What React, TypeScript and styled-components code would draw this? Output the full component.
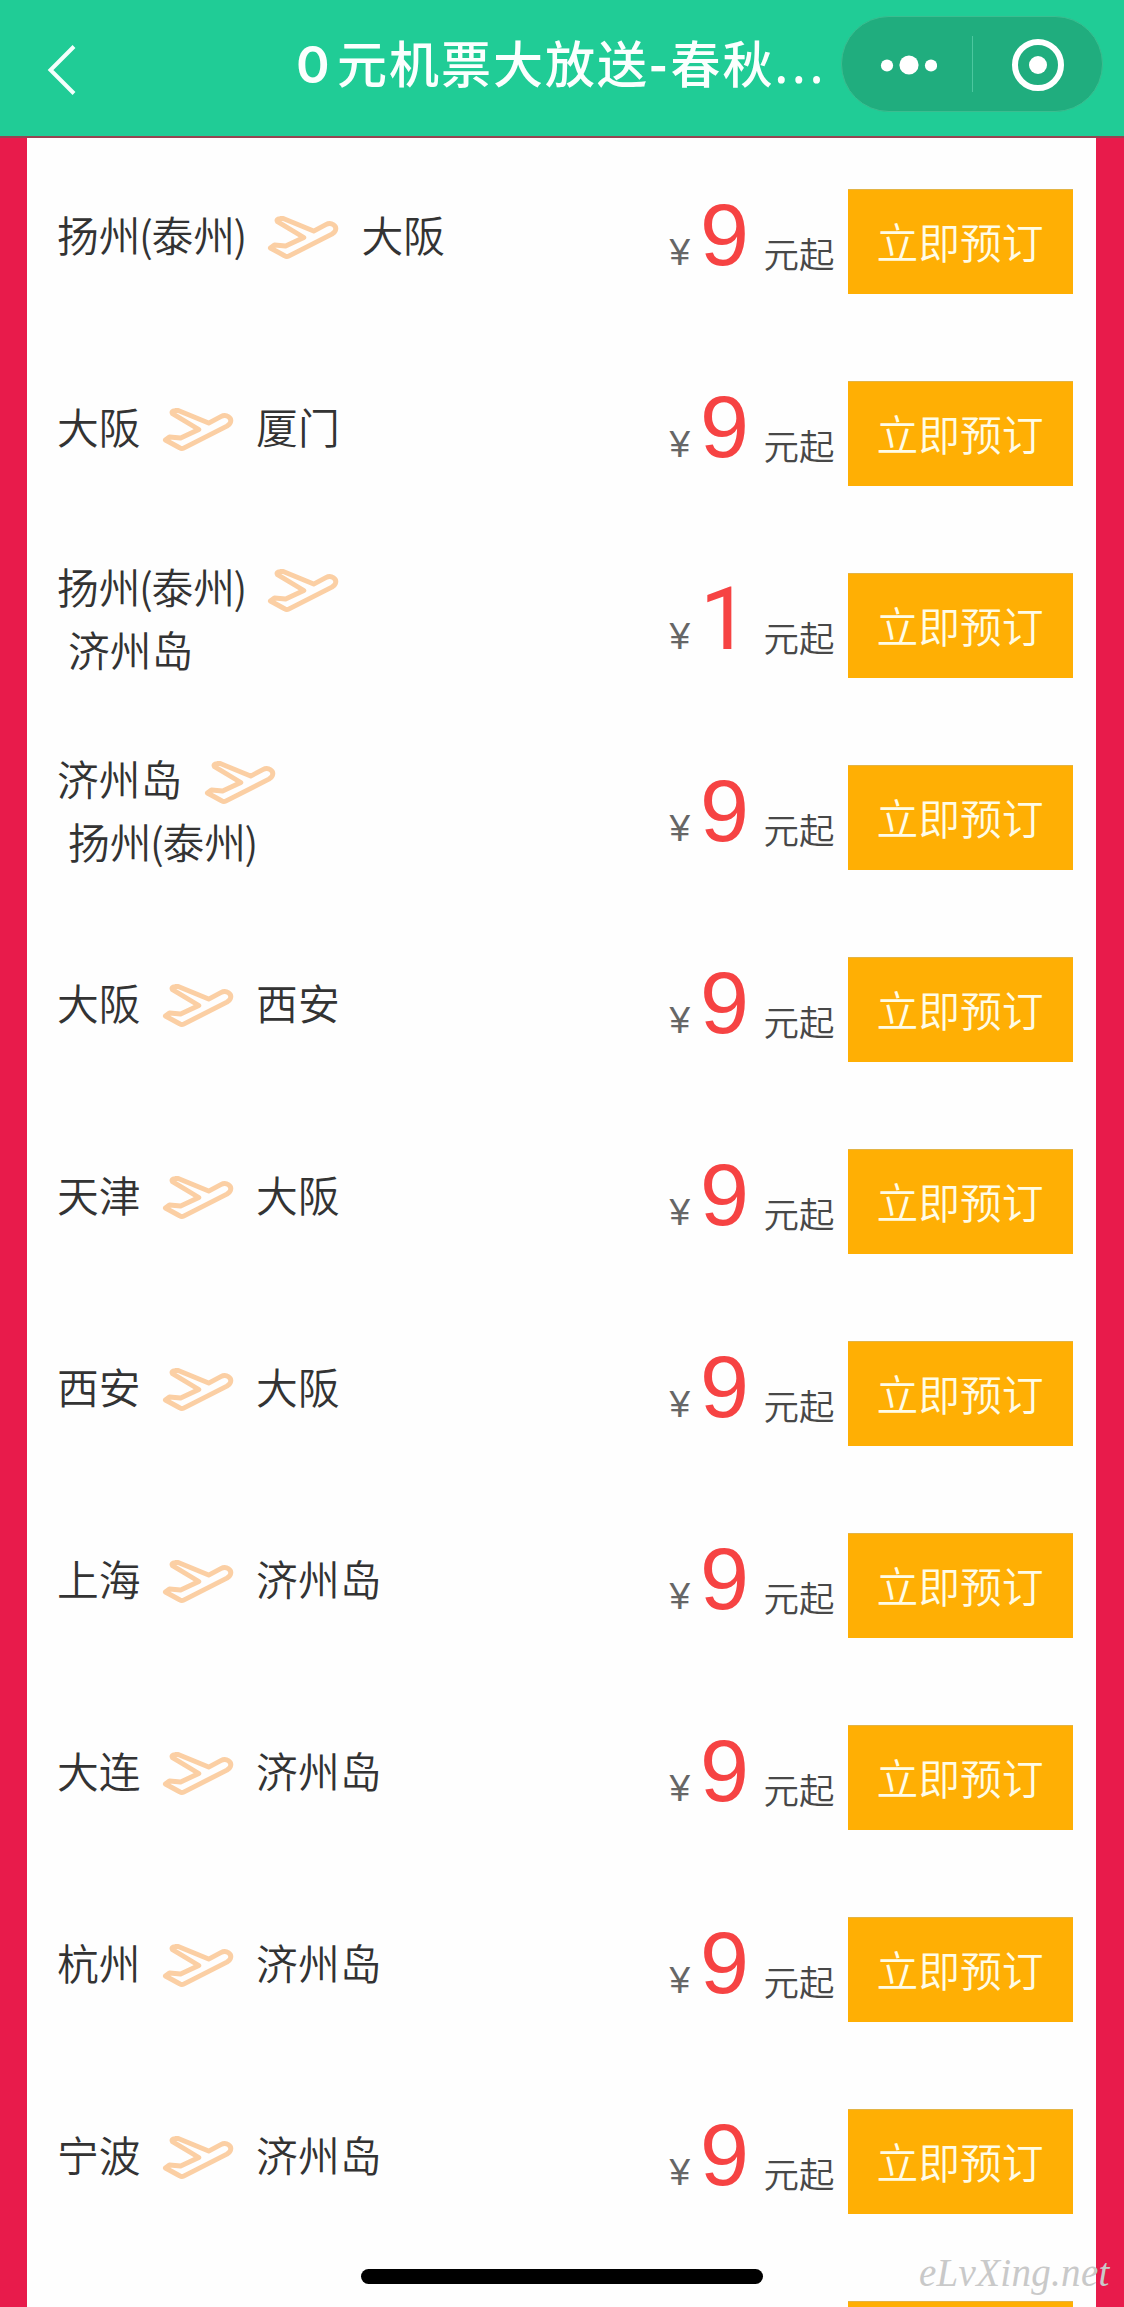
import React from "react";
import styled, { createGlobalStyle } from "styled-components";

const GlobalStyle = createGlobalStyle`
  * { box-sizing: border-box; }
  body { margin: 0; background: #e81b4b; }
`;

const Screen = styled.div`
  position: relative;
  width: 1124px;
  height: 2307px;
  overflow: hidden;
  display: flex;
  flex-direction: column;
  background: #e81b4b;
  font-family: "Liberation Sans", "Noto Sans CJK SC", sans-serif;
`;

const Header = styled.header`
  flex: none;
  height: 138px;
  display: flex;
  align-items: flex-start;
  background: #20cc96;
  border-bottom: 2px solid #954451;
`;

const BackButton = styled.button`
  display: flex;
  align-items: flex-start;
  width: 124px;
  height: 136px;
  padding: 43px 0 0 44px;
  border: 0;
  background: none;
`;

const Title = styled.h1`
  width: 717px;
  margin: 0;
  padding: 25px 0 0 172px;
  color: #fbfffe;
  font-family: "Noto Sans CJK SC", sans-serif;
  font-size: 50px;
  font-weight: 500;
  line-height: 72px;
  letter-spacing: 2px;
  white-space: nowrap;
`;

const Zero = styled.span`
  display: inline-block;
  width: 41px;
  font-family: Inter, sans-serif;
  font-size: 51px;
  font-weight: 600;
  line-height: 60px;
`;

const Hyphen = styled.span`
  font-weight: 700;
  letter-spacing: 3px;
`;

const Dots = styled.span`
  font-family: "Noto Sans", sans-serif;
  letter-spacing: 4px;
`;

const Capsule = styled.div`
  width: 262px;
  height: 96px;
  margin-top: 16px;
  border: 1px solid #3bbd90;
  border-radius: 48px;
  background: #20ad7e;
  display: flex;
  align-items: center;
`;

const CapsuleHalf = styled.div`
  flex: 1;
  display: flex;
  align-items: center;
  justify-content: center;
  padding: 1px 0 0 1px;
`;

const Divider = styled.div`
  width: 1px;
  height: 56px;
  background: #4cc79f;
`;

const List = styled.main`
  flex: 1;
  width: 1069px;
  margin-left: 27px;
  padding: 7px 23px 0 30px;
  background: #fefefe;
`;

const Row = styled.section`
  height: 192px;
  display: flex;
  align-items: flex-start;
`;

const Route = styled.div`
  width: 611px;
  height: 178px;
  display: flex;
  flex-direction: column;
  justify-content: center;
  color: #333;
  font-family: "Noto Sans CJK SC", sans-serif;
  font-size: 41.8px;
  font-weight: 350;
  line-height: 63px;
  white-space: nowrap;
`;

const RouteLine = styled.div<{ $wrapped?: boolean }>`
  display: flex;
  align-items: center;
  height: 63px;
  padding-left: ${(p) => (p.$wrapped ? 11 : 0)}px;
`;

const Paren = styled.span`
  margin: 0 -1.5px;
`;

const PlaneSvg = styled.svg`
  flex: none;
  width: 73px;
  height: 47px;
  margin: 7px 22px 0 20.5px;
`;

const Price = styled.div`
  width: 180px;
  height: 192px;
  padding: 44px 0 0 1.5px;
  display: flex;
  align-items: flex-start;
`;

const Currency = styled.span`
  width: 30.5px;
  margin-top: 43px;
  color: #666;
  font-size: 37px;
  line-height: 42px;
`;

const Amount = styled.strong<{ $face: string }>`
  width: 63.5px;
  color: #f64343;
  font-family: ${(p) => p.$face}, sans-serif;
  font-size: 88px;
  font-weight: 400;
  line-height: 92px;
`;

const Unit = styled.span`
  margin-top: 38px;
  color: #484848;
  font-family: "Noto Sans CJK SC", sans-serif;
  font-size: 35.5px;
  font-weight: 350;
  line-height: 52px;
  white-space: nowrap;
`;

const BookButton = styled.button`
  display: flex;
  justify-content: center;
  align-items: flex-start;
  width: 225px;
  height: 105px;
  margin: 44px 0 0;
  padding: 20px 1px 0 0;
  border: 0;
  border-top: 1px solid #e3b445;
  background: #ffaf04;
  color: #fffce6;
  font-family: "Noto Sans CJK SC", sans-serif;
  font-size: 41.8px;
  font-weight: 350;
  line-height: 62px;
  white-space: nowrap;
`;

const HomeIndicator = styled.div`
  position: absolute;
  left: 361px;
  top: 2269px;
  width: 402px;
  height: 15px;
  border-radius: 8px;
  background: #000;
`;

const Watermark = styled.div`
  position: absolute;
  left: 919px;
  top: 2250px;
  color: #c9c9c9;
  font-family: "Liberation Serif", serif;
  font-size: 39px;
  font-style: italic;
  line-height: 46px;
  letter-spacing: 0.3px;
  white-space: nowrap;
`;

const Plane = () => (
  <PlaneSvg viewBox="24 44 216 138" fill="none" stroke="#fbcfa4" strokeWidth="14.5" strokeLinejoin="round">
    <path d="M58 66 Q53 58 66 57 L75 57 L165 94 L201 75 C218 66 235 79 229 93 Q227 98 219 103 L91 168 Q85 171 79 167 L37 144 L49 135 L82 138 L136 113 Z" />
  </PlaneSvg>
);

const City = ({ name }: { name: string }) => (
  <span>
    {name.split(/([()])/).map((part, i) =>
      part === "(" || part === ")" ? <Paren key={i}>{part}</Paren> : part
    )}
  </span>
);

type Flight = { from: string; to: string; price: number; wrap?: boolean };

const flights: Flight[] = [
  { from: "扬州(泰州)", to: "大阪", price: 9 },
  { from: "大阪", to: "厦门", price: 9 },
  { from: "扬州(泰州)", to: "济州岛", price: 1, wrap: true },
  { from: "济州岛", to: "扬州(泰州)", price: 9, wrap: true },
  { from: "大阪", to: "西安", price: 9 },
  { from: "天津", to: "大阪", price: 9 },
  { from: "西安", to: "大阪", price: 9 },
  { from: "上海", to: "济州岛", price: 9 },
  { from: "大连", to: "济州岛", price: 9 },
  { from: "杭州", to: "济州岛", price: 9 },
  { from: "宁波", to: "济州岛", price: 9 },
];

const FlightRow = ({ from, to, price, wrap }: Flight) => (
  <Row>
    <Route>
      <RouteLine>
        <City name={from} />
        <Plane />
        {!wrap && <City name={to} />}
      </RouteLine>
      {wrap && (
        <RouteLine $wrapped>
          <City name={to} />
        </RouteLine>
      )}
    </Route>
    <Price>
      <Currency>¥</Currency>
      <Amount $face={price === 1 ? "Roboto" : "'Liberation Sans'"}>{price}</Amount>
      <Unit>元起</Unit>
    </Price>
    <BookButton>立即预订</BookButton>
  </Row>
);

export default function App() {
  return (
    <>
      <GlobalStyle />
      <Screen>
        <Header>
          <BackButton>
            <svg width="34" height="54" viewBox="0 0 34 54" fill="none" stroke="#f4fffc" strokeWidth="4">
              <path d="M30 3.5 L6.5 27 L30 50.5" />
            </svg>
          </BackButton>
          <Title>
            <Zero>0</Zero>元机票大放送<Hyphen>-</Hyphen>春秋<Dots>...</Dots>
          </Title>
          <Capsule>
            <CapsuleHalf>
              <svg width="60" height="24" viewBox="0 0 60 24" fill="#fff">
                <circle cx="10" cy="12.5" r="6.1" />
                <circle cx="32" cy="12" r="9.6" />
                <circle cx="54" cy="12.5" r="6.1" />
              </svg>
            </CapsuleHalf>
            <Divider />
            <CapsuleHalf>
              <svg width="54" height="54" viewBox="0 0 54 54">
                <circle cx="27" cy="27" r="23" fill="none" stroke="#fff" strokeWidth="6" />
                <circle cx="27" cy="27" r="9" fill="#fff" />
              </svg>
            </CapsuleHalf>
          </Capsule>
        </Header>
        <List>
          {flights.map((f) => (
            <FlightRow key={f.from + f.to} {...f} />
          ))}
          <Row>
            <Route />
            <Price />
            <BookButton />
          </Row>
        </List>
        <HomeIndicator />
        <Watermark>eLvXing.net</Watermark>
      </Screen>
    </>
  );
}
